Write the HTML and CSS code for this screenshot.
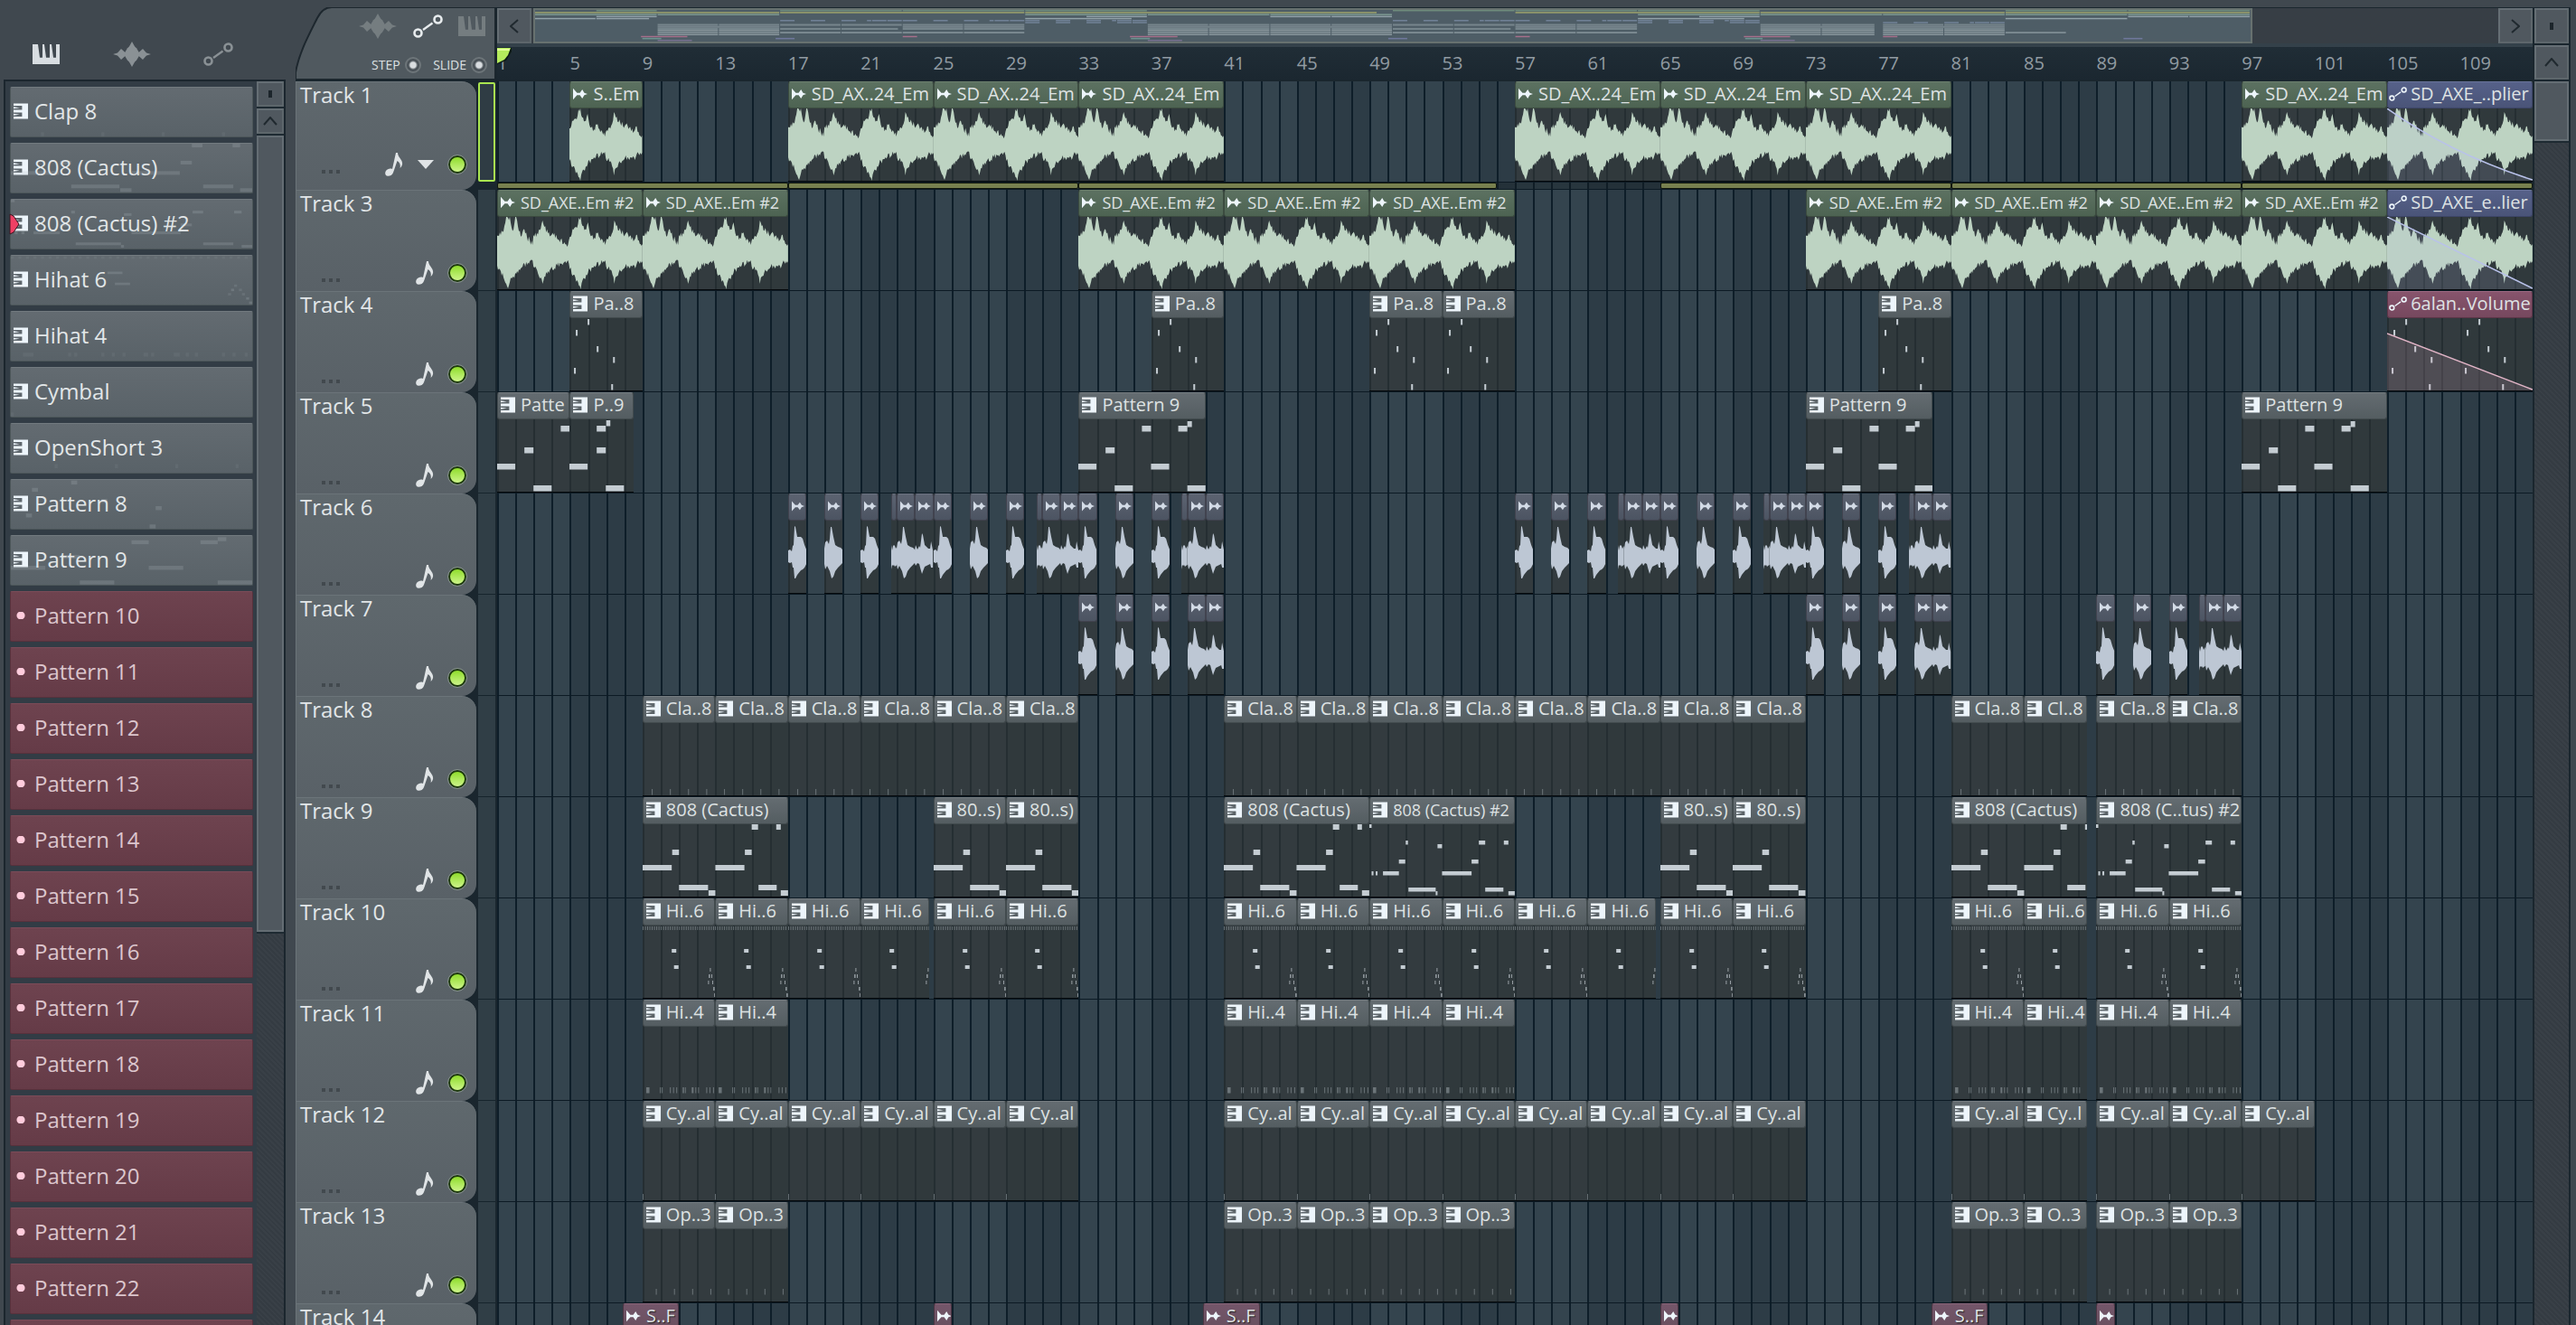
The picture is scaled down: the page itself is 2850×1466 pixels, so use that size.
FILE: index.html
```html
<!DOCTYPE html>
<html lang="en">
<head>
<meta charset="utf-8">
<title>Playlist</title>
<link rel="stylesheet" href="styles.css">
</head>
<body>
<svg class="symbols" aria-hidden="true">
  <symbol id="piano" viewBox="0 0 30 30" preserveAspectRatio="none"><path d="M0 0H6L8 20H11V0H13L15 20V20H19V0H21L23 20H26V0H30V30H0Z"/></symbol>
  <symbol id="wave" viewBox="0 0 42 38" preserveAspectRatio="none"><path d="M0 19L5 17L9 11L14 17L21 0L28 17L33 11L37 17L42 19L37 21L33 27L28 21L21 38L14 21L9 27L5 21Z"/><path d="M12 19L16 10L21 4L26 10L30 19L26 28L21 34L16 28Z"/></symbol>
  <symbol id="node" viewBox="0 0 33 26"><g fill="none" stroke="currentColor"><circle cx="5.500" cy="20.500" r="4" stroke-width="2.600"/><circle cx="27.500" cy="5.500" r="4" stroke-width="2.600"/><path d="M11 17L21.500 9.500" stroke-width="2.200"/></g></symbol>
  <symbol id="keys" viewBox="0 0 17 18"><path d="M0 0H17V18H0V15.500H10V10.500H0V7.500H10V2.500H0Z"/><path d="M0 4L7 5L0 6ZM0 12L7 13L0 14Z"/></symbol>
  <symbol id="audio" viewBox="0 0 18 14"><path d="M0 0L5 5.500H8.500L11.500 1.500L14 5.500L18 7L14 8.500L11.500 12.500L8.500 8.500H5L0 14Z"/></symbol>
  <symbol id="note" viewBox="0 0 20 26"><path d="M12 0H14C14 5 20 8 19 13C18.600 15 17.500 16 16.500 17C17.500 13 16 10.500 13.500 9L9 22C8 25 5 26 3 25.800C0 25.500-.500 22.500 1 20C2.500 18 5.500 17 8 18Z"/></symbol>
</svg>

<aside class="picker">
  <nav class="picker-tabs" aria-label="Picker">
    <button class="tab on" aria-label="Patterns"><svg class="i-piano"><use href="#piano"/></svg></button>
    <button class="tab" aria-label="Audio clips"><svg class="i-wave"><use href="#wave"/></svg></button>
    <button class="tab" aria-label="Automation clips"><svg class="i-node"><use href="#node"/></svg></button>
  </nav>
  <div class="picker-body">
    <div class="patterns" id="patterns"></div>
    <div class="vscroll picker-scroll">
      <button class="sb mark" aria-label="Resize"><i></i></button>
      <button class="sb up" aria-label="Scroll up"><svg viewBox="0 0 16 10"><path d="M1 9L8 1L15 9"/></svg></button>
      <div class="thumb"></div>
    </div>
  </div>
</aside>

<main class="playlist">
  <div class="corner">
    <svg class="corner-shape" viewBox="0 0 221 80" preserveAspectRatio="none"><path d="M0 80V72C4 50 14 32 24 12Q30 0 40 0H221V80Z"/></svg>
    <div class="corner-icons">
      <svg class="i-wave dim"><use href="#wave"/></svg>
      <svg class="i-node lit"><use href="#node"/></svg>
      <svg class="i-piano dim"><use href="#piano"/></svg>
    </div>
    <div class="corner-opts">
      <label>STEP <input type="radio" name="step"></label>
      <label>SLIDE <input type="radio" name="slide"></label>
    </div>
  </div>

  <div class="top">
    <div class="hscroll">
      <button class="sb" aria-label="Scroll left"><svg viewBox="0 0 10 16"><path d="M9 1L1 8L9 15"/></svg></button>
      <div class="overview"><svg id="overview" viewBox="0 0 112 34" preserveAspectRatio="none"></svg></div>
      <div class="rest"></div>
      <button class="sb right" aria-label="Scroll right"><svg viewBox="0 0 10 16"><path d="M1 1L9 8L1 15"/></svg></button>
    </div>
    <div class="ruler" id="ruler"></div>
    <svg class="playhead" viewBox="0 0 17 20"><path d="M0 1H16V5L10 15L0 19Z" fill="#0d1a14"/><path d="M0 1H15L12 9L8 14L0 18Z" fill="#b5ec5c"/><path d="M0 2H14V4H0Z" fill="#e2ff9a"/></svg>
  </div>

  <div class="top-right">
    <button class="sb mark" aria-label="Zoom"><i></i></button>
    <button class="sb" aria-label="Scroll up"><svg viewBox="0 0 16 10"><path d="M1 9L8 1L15 9"/></svg></button>
  </div>

  <div class="tracks" id="tracks"></div>
  <div class="stage">
    <div class="bars" id="bars"></div>
    <div class="lanes" id="lanes"></div>
  </div>
  <div class="vscroll side-scroll"><div class="thumb"></div></div>
</main>
<script src="playlist.js"></script>
</body>
</html>
```
FILE: styles.css
```css
* { box-sizing: border-box; }
html, body { height: 100%; }
body {
  margin: 0;
  display: flex;
  gap: 11px;
  overflow: hidden;
  background: #40484f;
  font-family: "Open Sans", "Noto Sans", sans-serif;
  font-size: 24px;
  color: #e2e6e8;
}
button, input { margin: 0; padding: 0; border: 0; font: inherit; color: inherit; appearance: none; background: none; }
svg { display: block; fill: currentColor; }
.symbols { position: absolute; width: 0; height: 0; }
.i-piano { width: 30px; height: 22px; }
.i-wave { width: 42px; height: 28px; }
.i-node { width: 33px; height: 26px; }

/* picker */
.picker { flex: 0 0 316px; padding-left: 4px; display: flex; flex-direction: column; }
.picker-tabs { height: 88px; padding: 32px 58px 0 32px; display: flex; justify-content: space-between; align-items: center; }
.tab { color: #8a9195; }
.tab.on { color: #d8dde1; }
.picker-body {
  flex: 1; min-height: 0; display: flex; gap: 4px; overflow: hidden;
  background: #323c45; border: 2px solid #1b262e; border-bottom: 0;
}
.patterns { flex: 1; padding: 6px 0 0 5px; display: flex; flex-direction: column; gap: 6px; overflow: hidden; }
.pattern {
  position: relative; flex: 0 0 56px; padding: 0 3px 3px; display: flex; align-items: center; gap: 7px;
  text-align: left; line-height: 32px; white-space: nowrap;
  background: linear-gradient(#636b71, #596268); border: 1px solid #4c5659; border-top-color: #727a7f; border-radius: 2px;
}
.pattern svg.keys { width: 16px; height: 18px; color: #edf5fb; }
.pattern .notes { position: absolute; inset: 0; width: 100%; height: 100%; color: #b8c2c8; opacity: .2; }
.pattern span { position: relative; }
.pattern.empty { background: linear-gradient(#6e434f, #653b47); border-color: #58313c; border-top-color: #7b4b58; color: #dcc6cd; }
.pattern .dot { width: 16px; height: 8px; background: radial-gradient(circle at 8px 4px, #ffccdc 4px, transparent 5px); }
.pattern .cursor { position: absolute; left: -2px; top: 15px; width: 12px; height: 24px; fill: #ee4064; stroke: #3a1620; stroke-width: 1; }

.sb {
  display: grid; place-items: center; background: #50585f;
  border: 2px solid #656e74; border-right-color: #5d666b; border-bottom-color: #5d666b;
}
.sb svg { width: 16px; height: 10px; fill: none; stroke: #20292f; stroke-width: 2; }
.hscroll .sb svg { width: 10px; height: 16px; }
.sb i { width: 4px; height: 8px; background: #1c252b; }
.vscroll { display: flex; flex-direction: column; gap: 2px; background: #1e2a32; }
.thumb { background: #50585f; border: 2px solid #646d73; }
.picker-scroll { flex: 0 0 30px; }
.picker-scroll::after, .side-scroll::after { content: ""; flex: 1; background: repeating-linear-gradient(45deg, #343b42 0 2px, #394047 2px 4px); }
.picker-scroll .sb { flex: 0 0 28px; }
.picker-scroll .thumb { flex: 0 0 64%; }
.side-scroll .thumb { flex: 0 0 66px; }

/* playlist frame */
.playlist {
  flex: 1; min-width: 0; margin-top: 8px; margin-right: 6px; padding-right: 2px; padding-top: 1px;
  display: grid; grid-template-columns: 221px minmax(0, 1fr) 38px; grid-template-rows: 79px minmax(0, 1fr); gap: 2px;
  background: #1a262e;
}
.corner { position: relative; margin-top: -1px; padding: 7px 9px 6px 84px; display: flex; flex-direction: column; justify-content: space-between; background: #40484f; }
.corner > div { position: relative; display: flex; justify-content: space-between; align-items: center; }
.corner-shape { position: absolute; inset: 0; width: 100%; height: 100%; fill: #50595f; stroke: #1d272e; stroke-width: 2; }
.corner > .corner-icons { padding: 0 2px 0 -0px; margin-left: -14px; }
.dim { color: #757d80; }
.lit { color: #e8ecee; }
.corner-opts label { display: flex; align-items: center; gap: 5px; font-size: 14px; line-height: 20px; color: #dde1e3; }
.corner-opts input { width: 18px; height: 18px; border-radius: 50%; border: 2px solid #6d7579; background: radial-gradient(circle, #d9dde0 3px, #495157 5px); }
.top { position: relative; display: flex; flex-direction: column; background: #34414a; }
.hscroll { display: flex; height: 39px; gap: 2px; background: #373e45; }
.hscroll .sb { flex: 0 0 38px; }
.overview { flex: 0 1 1902px; border: 2px solid #67716f; background: #4e5d66; }
.overview svg { width: 100%; height: 100%; }
.rest { flex: 1; }
.ruler {
  flex: 1; margin: 4px 0 2px; display: grid; grid-template-columns: repeat(28, minmax(0, 1fr));
  background: linear-gradient(#202d36, #1b2730); color: #929ca3; font-size: 20px; line-height: 36px;
}
.ruler span { white-space: nowrap; }
.playhead { position: absolute; left: 0; top: 43px; width: 17px; height: 20px; }
.top-right { display: grid; grid-template-rows: 39px 38px; gap: 2px; }

/* track headers */
.tracks { overflow: hidden; background: #1a262e; }
.track { display: grid; grid-template-columns: 200px 19px; gap: 2px; height: 112px; }
.track:first-child { height: 120px; }
.head {
  display: flex; flex-direction: column; justify-content: space-between; padding: 0 11px 7px 4px;
  background: linear-gradient(#5f686d, #596167); border-top: 1px solid #6b7479; border-left: 1px solid #6b7479;
  border-radius: 0 16px 16px 0; line-height: 28px;
}
.track:first-child .head { padding-bottom: 15px; }
.head .tools { display: flex; align-items: center; gap: 16px; }
.dots { width: 20px; height: 4px; margin: 16px auto 0 24px; background: repeating-linear-gradient(90deg, #42494e 0 4px, transparent 4px 8px); }
.head .note { width: 20px; height: 26px; color: #e0e4e6; }
.head .caret { width: 18px; height: 10px; color: #e0e4e6; }
.led {
  width: 20px; height: 20px; border-radius: 50%; border: 2px solid #1d3a0c; outline: 1px solid #84908a;
  background: linear-gradient(#8fdc2c, #cdf58a);
}
.peak { background: #303e46; border-bottom: 1px solid #16242c; }
.track:first-child .peak { margin: 1px 0 9px; border: 2px solid #a9e550; border-radius: 2px; background: #2f3c44; }

/* arrangement */
.stage { display: grid; grid-template: minmax(0, 1fr) / minmax(0, 1fr); overflow: hidden; background: #2d3c46; }
.bars, .lanes { grid-area: 1 / 1; min-height: 0; }
.bars { display: grid; grid-template-columns: repeat(112, minmax(0, 1fr)); }
.bars i { border-left: 2px solid #0e1e29; }
.bars i:nth-child(8n+1), .bars i:nth-child(8n+2), .bars i:nth-child(8n+3), .bars i:nth-child(8n+4) { background: #34444e; }
.lane {
  height: 112px; display: grid; grid-template-columns: repeat(1344, minmax(0, 1fr)); grid-template-rows: 100%;
  border-bottom: 1px solid #0c1a24;
}
.lane.thin { height: 8px; background: rgba(20, 28, 34, .35); }
.thin .clip { border: 1px solid #10160c; background: #77804f; border-radius: 2px; }
.clip { grid-row: 1; min-width: 0; display: flex; flex-direction: column; overflow: hidden; background: rgba(50, 56, 56, .65); border-bottom: 1px solid #05090c; color: #c4ccd2; }
.bar {
  flex: 0 0 30px; display: flex; align-items: center; gap: 6px; padding: 0 0 2px 3px; overflow: hidden; white-space: nowrap;
  font-size: 20px; line-height: 28px; color: #dee2e3;
  background: linear-gradient(#646c71, #545d61); border: 1px solid #424b4e; border-top-color: #757c80; border-radius: 3px;
}
.bar svg { flex: none; width: 16px; height: 18px; color: #edf5fb; }
.bar.snug { font-size: 18px; }
.clip > svg { flex: 1; width: 100%; min-height: 0; }
.green { color: #bdd3c2; }
.green .bar { background: linear-gradient(#5c7161, #4d6352); border-color: #3c4c40; border-top-color: #6c806d; }
.green .bar svg, .drum .bar svg, .pink .bar svg { height: 14px; }
.drum { color: #bdc7d4; }
.drum .bar { background: linear-gradient(#5c6371, #4c5462); border-color: #41434f; border-top-color: #6b7280; }
.drum .bar svg { color: #d3dbe6; width: 14px; }
.pink .bar { background: linear-gradient(#74566a, #68505f); border-color: #4b3442; border-top-color: #8a6478; text-shadow: 1px 1px 1px #222; }
.auto { background: none; }
.auto .bar { background: linear-gradient(#566189, #4a5478); border-color: #3d4568; border-top-color: #69739a; gap: 4px; }
.auto .bar svg { width: 20px; margin-left: -2px; }
.auto.red .bar { background: linear-gradient(#87546c, #76485e); border-color: #5c3548; border-top-color: #9a6680; }
```
FILE: playlist.js
```js
const BAR = 20;      // drawing units per bar
const H = 80;        // drawing units per clip body
const SUB = 12;      // grid columns per bar
const PALE = 0.4;

const rect = ([x, y, w, h = 6.5, o = 1]) =>
  `<rect x="${x}" y="${y}" width="${w}" height="${h}" opacity="${o}"/>`;

const hat6 = () => {
  const out = [];
  for (let x = 0; x < 80; x += 2.5) out.push([x, 1, 1, 4, PALE]);
  return out.concat([[32, 26, 5, 4], [34.5, 44, 5, 4], [72, 61, 1, 4, .7], [73, 54, 1, 4], [74, 47, 1, 4, .7],
    [75.6, 54, 1, 4, .7], [76.6, 61, 1, 4, .7], [78, 68, 1, 4], [79, 75, 1, 4]]);
};
const bass = [[0, 45, 32, 6], [32.5, 28, 7.5, 6], [40, 67, 32, 6], [72.5, 73, 7.5, 6]];
const patterns = {
  clap: [10, 30, 50, 70].map(x => [x, 73, 1, 6.5, PALE]),
  bass,
  bass8: bass.concat([[80, 45, 32, 6], [112.5, 28, 7.5, 6], [120, 0, 7, 6], [147, 0, 5, 6], [127.5, 67, 20, 6], [152, 73, 8, 6]]),
  bass2: [[0, 0, 2.5, 4], [2.5, 52, 2, 4.5], [7, 52, 2, 4.5], [15, 52, 17.500, 4.5], [32.5, 39, 7, 4.5], [40, 18, 2.5, 4.5],
    [43, 70, 30, 4.5], [73, 74, 2, 4.5], [75, 22, 5, 4.5], [80, 52, 32.5, 4.5], [112.5, 39, 7.5, 4.5], [120.500, 18, 7, 4.5],
    [127.5, 70, 20, 4.5], [148, 18, 5, 4.5], [153, 74, 7, 4.5]],
  hat6: hat6(),
  hat4: [[4, 3.5], [19, 1], [21, 1], [30, 1], [33.5, 1], [37, 1], [44, 1.500], [46.5, 1], [54, 2], [58, 1], [61, 1], [70, 1], [73.5, 1], [77.5, 1]]
    .map(([x, w]) => [x, 67, w, 6.5, PALE]),
  cymbal: [[0, 73, 1, 6.5, PALE]],
  open: [14.5, 34.5, 54.5, 74.5].map(x => [x, 66, 1, 6.5, PALE]),
  p8: [[20, 1, 2], [7, 13, 2], [30, 31, 2], [48, 43, 2], [5, 55, 2], [46, 73, 2]],
  p9: [[0, 49, 20], [30, 31, 10], [40, 73, 20], [70, 7, 10], [80, 49, 20], [110, 7, 10], [120, 2, 5], [120, 73, 20]]
};

/* envelopes: [x, height above centre, height below centre] */
const loop = [[0, 19, 14], [4, 20, 20], [8, 30, 30], [10, 40, 34], [12, 39, 39], [14, 40, 32], [16, 28, 28], [18, 26, 26], [20, 40, 22],
  [22, 36, 20], [24, 24, 18], [27, 19, 16], [30, 26, 12], [33, 17, 13], [36, 14, 9], [39, 9, 8], [40, 20, 15], [44, 22, 19], [48, 27, 27],
  [50, 36, 34], [52, 29, 26], [56, 22, 20], [60, 20, 15], [63, 22, 17], [66, 16, 14], [70, 15, 12], [74, 12, 10], [78, 9, 8], [80, 18, 18],
  [84, 26, 24], [88, 28, 30], [90, 39, 36], [92, 40, 40], [94, 30, 30], [98, 26, 24], [100, 34, 22], [102, 22, 18], [107, 17, 14],
  [110, 22, 10], [113, 17, 13], [117, 11, 9], [119, 9, 8], [120, 14, 15], [124, 19, 19], [127, 23, 24], [129, 36, 34], [131, 30, 26],
  [136, 24, 20], [141, 21, 15], [146, 19, 17], [150, 13, 13], [153, 20, 14], [156, 14, 10], [160, 10, 9]];
const hits = {
  a: [[0, 7, 6], [2, 8, 7], [4, 6, 6], [5, 12, 12], [6, 13, 12], [7, 34, 24], [8, 33, 24], [10, 22, 20], [14, 22, 15], [16, 20, 14], [18, 13, 12], [20, 8, 8]],
  b: [[0, 9, 8], [1, 16, 14], [3, 18, 10], [5, 14, 14], [6, 20, 16], [7, 33, 20], [8, 33, 24], [10, 22, 22], [12, 13, 16], [15, 11, 12], [18, 10, 9], [20, 8, 7]],
  c: [[0, 7, 7], [1, 13, 10], [3, 8, 7], [5, 12, 8], [6, 10, 12], [8, 26, 19], [9, 24, 16], [11, 13, 11], [15, 9, 9], [17, 9, 8], [18, 17, 12], [20, 7, 12]],
  s: [[0, 13, 14], [1, 7, 9], [2, 12, 10], [3, 13, 9], [4, 12, 11], [5, 9, 10], [6.700, 12, 9]]
};

function wave(points, rough) {
  let seed = 7;
  const rnd = () => (seed = (seed * 73 + 41) % 1009) / 1009;
  const top = [], low = [];
  points.forEach(([x, u, d], i) => {
    top.push(`${x},${40 - u}`);
    low.unshift(`${x},${40 + d}`);
    const n = points[i + 1];
    if (!n || !rough) return;
    for (let k = x + 1; k < n[0]; k++) {
      const t = (k - x) / (n[0] - x), j = (rnd() - .5) * 7;
      top.push(`${k},${Math.max(0, 40 - u - (n[1] - u) * t - j)}`);
      low.unshift(`${k},${Math.min(80, 40 + d + (n[2] - d) * t + (rnd() - .5) * 7)}`);
    }
  });
  return `<polygon points="${top.concat(low).join(' ')}"/>`;
}
const loopShape = wave(loop, true);

/* clip: [start bar, end bar, label, drawing, options] */
const run = (starts, len, label, art, kind) => starts.map(s => [s, s + len, label, art, kind]);
const em = s => [s, s + 8, 'SD_AX..24_Em', 'loop', 'green'];
const em2 = s => [s, s + 8, 'SD_AXE..Em #2', 'loop', 'green snug'];
const drums = list => list.map(([s, k]) => [s, k === 's' ? s + 1 / 3 : s + 1, '', k, 'drum']);
const T = 2 / 3;
const fill = o => drums([[17, 'a'], [19, 'b'], [21, 'a'], [22 + T, 's'], [23, 'b'], [24, 'c'], [25, 'a'], [27, 'b'], [29, 'a'], [30 + T, 's'],
  [31, 'b'], [32, 'c'], [33, 'a'], [35, 'b'], [37, 'a'], [38 + T, 's'], [39, 'b'], [40, 'c']].map(([s, k]) => [s + o, k]));
const four = (starts, label, art) => run(starts, 4, label, art, '');
const cut = (s, e, label, art) => [s, e, label, art, ''];

const lanes = [
  { name: 'Track 1', clips: [[5, 9, 'S..Em', 'loop2', 'green'], ...[17, 25, 33, 57, 65, 73, 97].map(em), [105, 113, '', 'loop', 'green'],
    [105, 113, 'SD_AXE_..plier', 'curve', 'auto']] },
  { thin: true, clips: [[1, 17], [17, 33], [33, 56], [65, 81], [81, 97], [97, 113]] },
  { name: 'Track 3', clips: [...[1, 9, 33, 41, 49, 73, 81, 89, 97].map(em2), [105, 113, '', 'loop', 'green'], [105, 113, 'SD_AXE_e..lier', 'line', 'auto']] },
  { name: 'Track 4', clips: [...four([5, 37, 49, 53, 77], 'Pa..8', 'p8'), ...four([105, 109], '', 'p8'), [105, 113, '6alan..Volume', 'fade', 'auto red']] },
  { name: 'Track 5', clips: [cut(1, 5, 'Patte', 'p9'), cut(5, 8.5, 'P..9', 'p9b'), cut(33, 40, 'Pattern 9', 'p9'), cut(73, 80, 'Pattern 9', 'p9'), cut(97, 105, 'Pattern 9', 'p9')] },
  { name: 'Track 6', clips: [...fill(0), ...fill(40)] },
  { name: 'Track 7', clips: drums([[33, 'a'], [35, 'b'], [37, 'a'], [39, 'b'], [40, 'c'], [73, 'a'], [75, 'b'], [77, 'a'], [79, 'b'], [80, 'c'],
    [89, 'a'], [91, 'b'], [93, 'a'], [94 + T, 's'], [95, 'b'], [96, 'c']]) },
  { name: 'Track 8', clips: [...four([9, 13, 17, 21, 25, 29, 41, 45, 49, 53, 57, 61, 65, 69, 81], 'Cla..8', 'clap'), cut(85, 88.5, 'Cl..8', 'clap'), ...four([89, 93], 'Cla..8', 'clap')] },
  { name: 'Track 9', clips: [cut(9, 17, '808 (Cactus)', 'bass8'), ...four([25, 29], '80..s)', 'bass'), cut(41, 49, '808 (Cactus)', 'bass8'),
    [49, 57, '808 (Cactus) #2', 'bass2', 'snug'], ...four([65, 69], '80..s)', 'bass'), cut(81, 88.5, '808 (Cactus)', 'bass8'), cut(89, 97, '808 (C..tus) #2', 'bass2')] },
  { name: 'Track 10', clips: [...four([9, 13, 17], 'Hi..6', 'hat6'), cut(21, 24.75, 'Hi..6', 'hat6'), ...four([25, 29, 41, 45, 49, 53, 57], 'Hi..6', 'hat6'),
    cut(61, 64.75, 'Hi..6', 'hat6'), ...four([65, 69, 81], 'Hi..6', 'hat6'), cut(85, 88.5, 'Hi..6', 'hat6'), ...four([89, 93], 'Hi..6', 'hat6')] },
  { name: 'Track 11', clips: [...four([9, 13, 41, 45, 49, 53, 81], 'Hi..4', 'hat4'), cut(85, 88.5, 'Hi..4', 'hat4'), ...four([89, 93], 'Hi..4', 'hat4')] },
  { name: 'Track 12', clips: [...four([9, 13, 17, 21, 25, 29, 41, 45, 49, 53, 57, 61, 65, 69, 81], 'Cy..al', 'cymbal'), cut(85, 88.5, 'Cy..l', 'cymbal'), ...four([89, 93, 97], 'Cy..al', 'cymbal')] },
  { name: 'Track 13', clips: [...four([9, 13, 41, 45, 49, 53, 81], 'Op..3', 'open'), cut(85, 88.5, 'O..3', 'open'), ...four([89, 93], 'Op..3', 'open')] },
  { name: 'Track 14', clips: [[8 - 1 / 12, 11, 'S..F', 'a', 'pink'], [25, 26, '', 'a', 'pink'], [40 - 1 / 6, 43, 'S..F', 'a', 'pink'], [65, 66, '', 'a', 'pink'],
    [80 - 1 / 12, 83, 'S..F', 'a', 'pink'], [89, 90, '', 'a', 'pink']] }
];

function art(key) {
  if (key === 'loop') return [0, loopShape];
  if (key === 'loop2') return [80, loopShape];
  if (hits[key]) return [0, wave(hits[key], false)];
  if (key === 'curve') return [0, '<path d="M0 0Q70 50 160 79V80H0Z" fill="#b8c0e8" opacity=".14"/><path d="M0 0Q70 50 160 79" fill="none" stroke="#b9c2ea" stroke-width="1.500"/>'];
  if (key === 'line') return [0, '<path d="M0 0L160 79V80H0Z" fill="#b8c0e8" opacity=".14"/><path d="M0 0L160 79" fill="none" stroke="#b9c2ea" stroke-width="1.500"/>'];
  if (key === 'fade') return [0, '<path d="M0 17L160 79V80H0Z" fill="#e8b0c4" opacity=".16"/><path d="M0 17L160 79" fill="none" stroke="#e0b4c6" stroke-width="1.500"/>'];
  if (key === 'p9b') return [0, patterns.p9.slice(0, 3).concat([[30, 7, 10], [40.500, 1, 4.500]]).map(rect).join('')];
  return [0, patterns[key].map(rect).join('')];
}

const icon = kind => /auto/.test(kind) ? 'node' : /green|drum|pink/.test(kind) ? 'audio' : 'keys';

function clipHTML([s, e, label, key, kind = '']) {
  const col = `style="grid-column:${Math.round((s - 1) * SUB) + 1}/${Math.round((e - 1) * SUB) + 1}"`;
  if (!key) return `<div class="clip" ${col}></div>`;
  const w = (e - s) * BAR, [x, body] = art(key);
  const snug = /snug/.test(kind) ? ' snug' : '';
  const mark = e - s < .5 ? '' : `<svg><use href="#${icon(kind)}"/></svg>`;
  return `<div class="clip ${kind.replace('snug', '')}" ${col}><div class="bar${snug}">${mark}<span>${label}</span></div>` +
    `<svg viewBox="${x} 0 ${w} ${H}" preserveAspectRatio="none">${body}</svg></div>`;
}

const $ = id => document.getElementById(id);
$('lanes').innerHTML = lanes.map(l => `<div class="lane${l.thin ? ' thin' : ''}">${l.clips.map(clipHTML).join('')}</div>`).join('');
$('bars').innerHTML = '<i></i>'.repeat(112);
$('ruler').innerHTML = Array.from({ length: 28 }, (_, i) => `<span>${i * 4 + 1}</span>`).join('');

$('tracks').innerHTML = lanes.filter(l => l.name).map((l, i) => `<div class="track"><div class="head"><span>${l.name}</span>
  <div class="tools"><i class="dots"></i><svg class="note"><use href="#note"/></svg>${i ? '' : '<svg class="caret" viewBox="0 0 18 10"><path d="M0 0H18L9 10Z"/></svg>'}
  <input type="checkbox" class="led" checked aria-label="${l.name} on"></div></div><div class="peak"></div></div>`).join('');

const items = [['Clap 8', 'clap', 80], ['808 (Cactus)', 'bass8', 160], ['808 (Cactus) #2', 'bass2', 160], ['Hihat 6', 'hat6', 80], ['Hihat 4', 'hat4', 80],
  ['Cymbal', 'cymbal', 80], ['OpenShort 3', 'open', 80], ['Pattern 8', 'p8', 80], ['Pattern 9', 'p9', 140]];
for (let n = 10; n <= 22; n++) items.push([`Pattern ${n}`]);
items.push(['']);
$('patterns').innerHTML = items.map(([name, key, w], i) => key
  ? `<button class="pattern"><svg class="notes" viewBox="0 0 ${w} ${H}" preserveAspectRatio="none">${patterns[key].map(rect).join('')}</svg>
     <svg class="keys"><use href="#keys"/></svg><span>${name}</span>${i === 2 ? '<svg class="cursor" viewBox="0 0 12 24"><path d="M1 1L5 3L11 12L5 21L1 23Z"/></svg>' : ''}</button>`
  : `<button class="pattern empty"><i class="dot"></i><span>${name}</span></button>`).join('');

/* overview: one thin strip per lane, plus the lanes below the fold */
const tint = ['#6f8c7c', '#a0a66c', '#7f9c94', '#93a3aa', '#93a3aa', '#73849a', '#73849a', '#76858c', '#76858c', '#76858c', '#8b999f', '#8b999f', '#8b999f', '#a8708c'];
const strip = (s, e, y, c, h) => `<rect x="${s - 1}" y="${y}" width="${e - s - .06}" height="${h}" fill="${c}"/>`;
const extra = [[8, 9.3, 30, '#6c9490'], [9, 11.3, 32, '#77718f'], [16.7, 18, 30, '#6f789c'], [39.9, 41.2, 30, '#6c9490'], [41, 43.3, 32, '#77718f'],
  [56.7, 58, 30, '#6f789c'], [80, 81.2, 30, '#6c9490'], [81, 83.3, 32, '#77718f'], [104.7, 106, 30, '#6f789c']];
$('overview').innerHTML = lanes.map((l, i) => l.clips.filter(c => !/auto/.test(c[4])).map(c => strip(c[0], c[1], i * 2.15, tint[i], i > 6 && i < 10 ? 2 : 1.4)).join('')).join('') +
  extra.map(([s, e, y, c]) => strip(s, e, y, c, 1.5)).join('');
```
